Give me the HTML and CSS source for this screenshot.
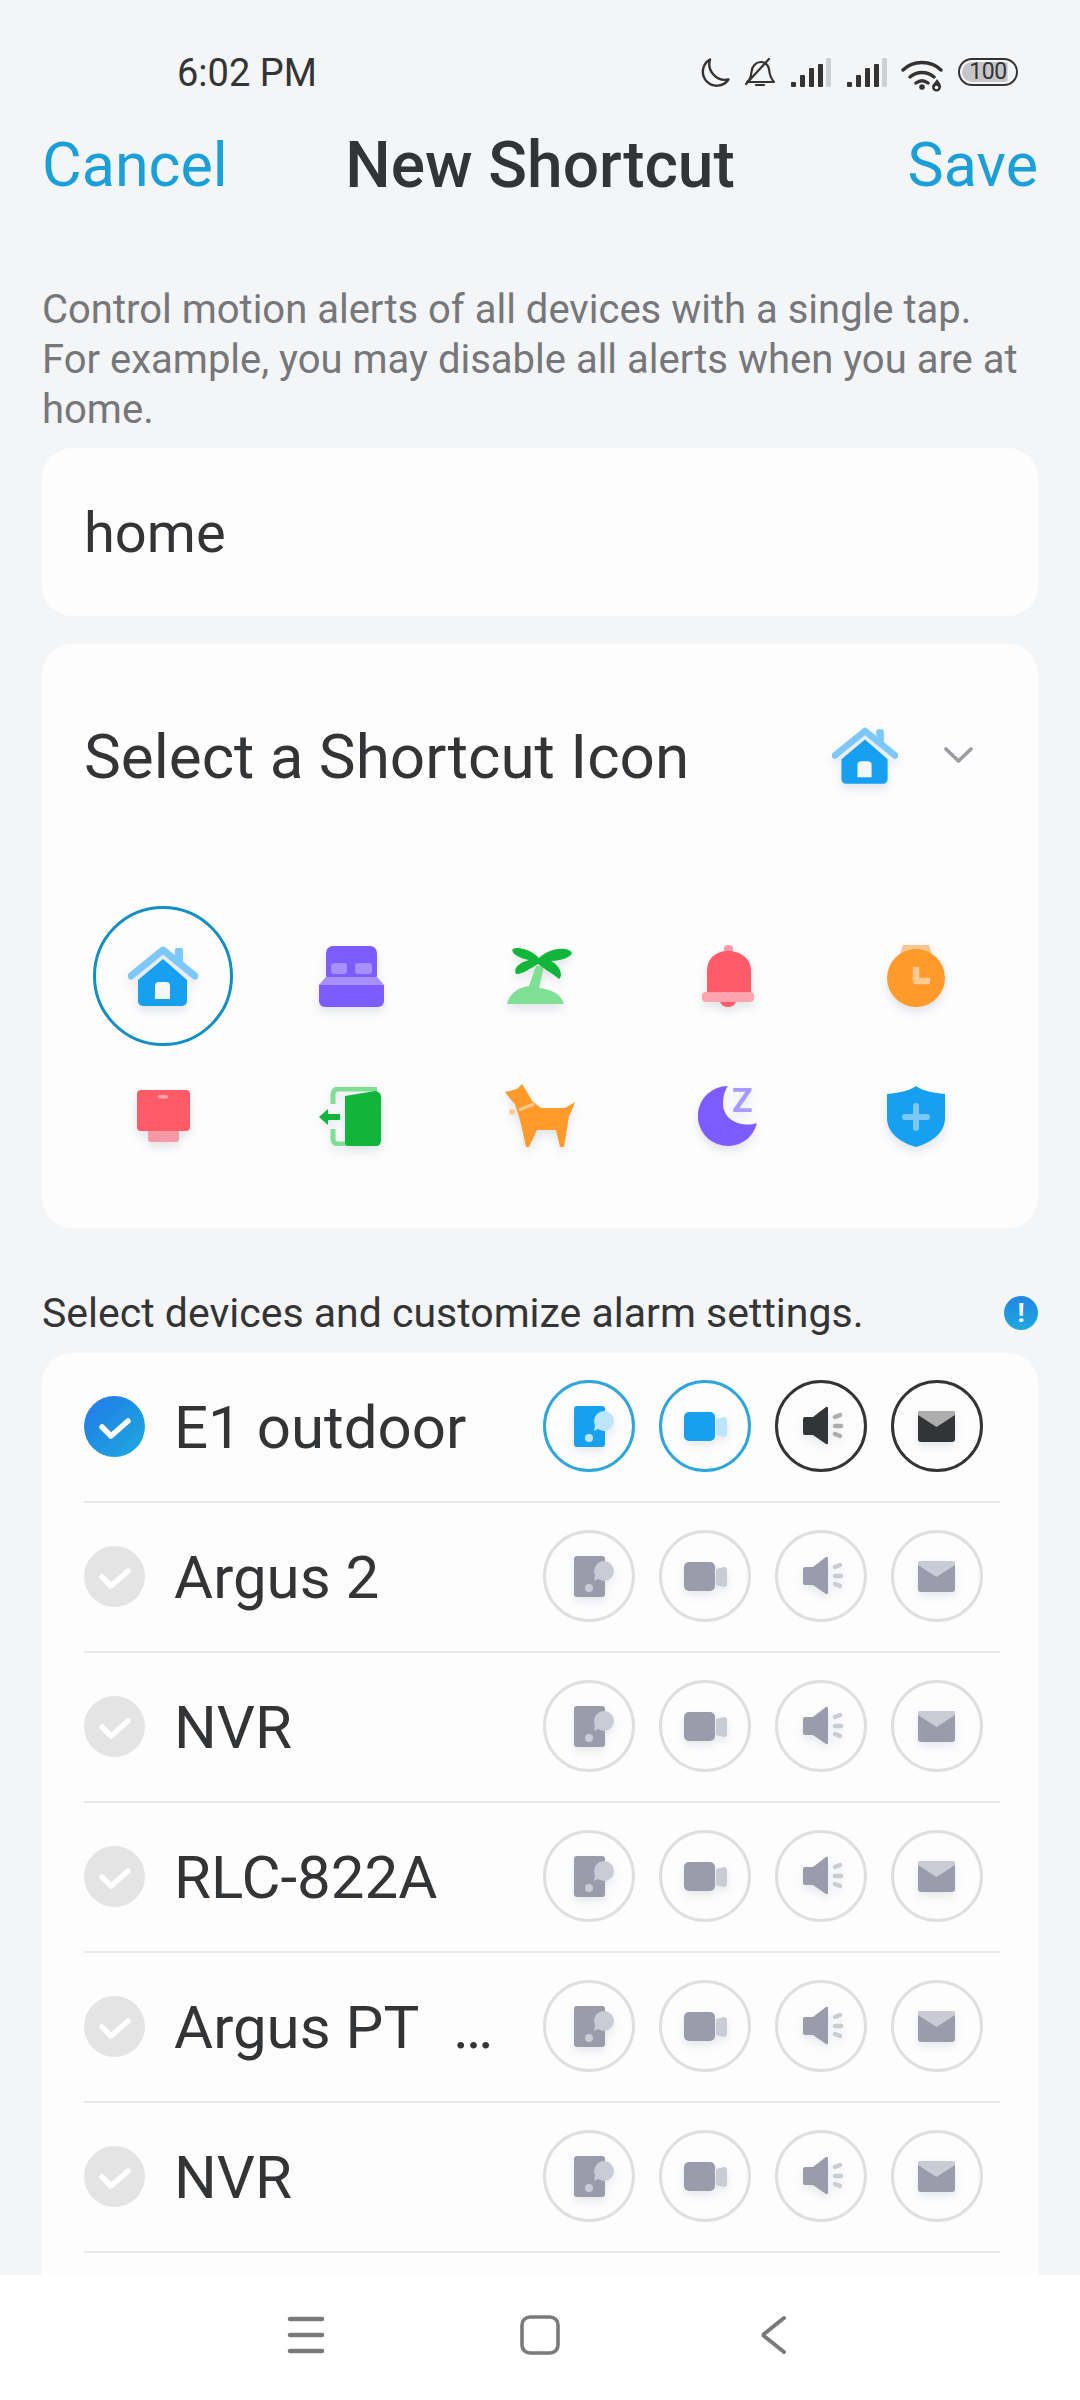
FILE: index.html
```html
<!DOCTYPE html>
<html lang="en">
<head>
  <meta charset="UTF-8" />
  <meta name="viewport" content="width=device-width, initial-scale=1.0" />
  <title>New Shortcut</title>
  <link rel="stylesheet" href="styles.css">
</head>
<body>
  <!-- shared icons -->
  <svg class="sprite" width="0" height="0">
    <symbol id="i-home" viewBox="0 0 70 61">
      <rect x="47" y="2" width="8" height="14" rx="2" fill="#7cc8fb"/>
      <path d="M3 30 35 4l32 26" fill="none" stroke="#7cc8fb" stroke-width="7" stroke-linecap="round" stroke-linejoin="round"/>
      <path d="M35 13 59 34v21a5 5 0 0 1-5 5H15a5 5 0 0 1-5-5V34Z" fill="#18a0f0"/>
      <path d="M27 53V40a4 4 0 0 1 4-4h7a4 4 0 0 1 4 4v13Z" fill="#f4f6f8"/>
    </symbol>
    <symbol id="i-door-cam" viewBox="0 0 92 92">
      <rect x="31" y="26" width="31" height="41" rx="3" fill="var(--main)"/>
      <circle cx="61" cy="41" r="10" fill="var(--soft)"/>
      <path d="M52 45l-1 6 6-3Z" fill="var(--soft)"/>
      <circle cx="46" cy="58" r="4" fill="var(--soft)"/>
    </symbol>
    <symbol id="i-video" viewBox="0 0 92 92">
      <rect x="25" y="32" width="31" height="29" rx="5" fill="var(--main)"/>
      <path d="M57 39l8-2a3 3 0 0 1 3 3v14a3 3 0 0 1-3 3l-8-2Z" fill="var(--soft)"/>
    </symbol>
    <symbol id="i-siren" viewBox="0 0 92 92">
      <path d="M30 37h8l13-10a1.500 1.500 0 0 1 2 1v35a1.500 1.500 0 0 1-2 1L38 55h-8a2 2 0 0 1-2-2V39a2 2 0 0 1 2-2Z" fill="var(--main)"/>
      <path d="M60 37l5-2M60 46h6M60 54l5 2" fill="none" stroke="var(--soft)" stroke-width="4.500" stroke-linecap="round"/>
    </symbol>
    <symbol id="i-mail" viewBox="0 0 92 92">
      <rect x="27" y="31" width="37" height="31" rx="3" fill="var(--main)"/>
      <path d="M27 33a2 2 0 0 1 2-2h33a2 2 0 0 1 2 2v2L45.500 47 27 35Z" fill="var(--soft)"/>
    </symbol>
    <symbol id="i-check" viewBox="0 0 61 61">
      <path d="M18 31l9 9 17-15" fill="none" stroke="#fff" stroke-width="5.500" stroke-linecap="round" stroke-linejoin="round"/>
    </symbol>
    <symbol id="i-signal" viewBox="0 0 40 30">
      <rect x="0" y="24" width="5" height="5" rx="1" fill="#333"/>
      <rect x="9" y="17" width="5" height="12" rx="1" fill="#333"/>
      <rect x="18" y="10" width="5" height="19" rx="1" fill="#333"/>
      <rect x="27" y="6" width="5" height="23" rx="1" fill="#333"/>
      <rect x="35" y="0" width="5" height="29" rx="1" fill="#cfd0d2"/>
    </symbol>
  </svg>

  <div class="page">
    <div class="status">
      <span class="time">6:02 PM</span>
      <div class="status-icons">
        <svg width="31" height="30" viewBox="0 0 31 30"><path d="M11 1.500a14 14 0 1 0 18.500 20C18 24 7.500 13 11 1.500Z" fill="none" stroke="#333" stroke-width="2.400" stroke-linejoin="round"/></svg>
        <svg class="bell-off" width="31" height="30" viewBox="0 0 31 30"><path d="M3 24c3-2 4-5 4.500-10C8 8 12 4 17 4c4 0 7 3 8 7 .5 5 2 10 5 13ZM12 27h8M2 26 25 1" fill="none" stroke="#333" stroke-width="2.200" stroke-linecap="round" stroke-linejoin="round"/></svg>
        <svg class="signal" width="40" height="30"><use href="#i-signal"/></svg>
        <svg class="signal" width="40" height="30"><use href="#i-signal"/></svg>
        <svg class="wifi" width="44" height="34" viewBox="0 0 44 34"><path d="M2 12C12 2 30 2 40 12M9 19c7-6 17-6 24 0M15 25c4-3 8-3 12 0" fill="none" stroke="#333" stroke-width="3.400" stroke-linecap="round"/><circle cx="21" cy="29" r="2.800" fill="#333"/><path d="M36 21c1 2 4 4 4 8a4.500 4.500 0 0 1-9 0c0-3 3-4 5-8Z" fill="#333"/><circle cx="35.500" cy="29.500" r="1.800" fill="#f4f5f7"/></svg>
        <div class="battery"><span class="battery-num">100</span></div>
      </div>
    </div>

    <header class="topbar">
      <span class="link">Cancel</span>
      <h1>New Shortcut</h1>
      <span class="link save">Save</span>
    </header>

    <p class="hint">Control motion alerts of all devices with a single tap.<br>For example, you may disable all alerts when you are at<br>home.</p>

    <div class="card name-card">home</div>

    <div class="card icon-card">
      <div class="icon-head">
        <span class="icon-title">Select a Shortcut Icon</span>
        <svg class="shadow" width="66" height="58"><use href="#i-home"/></svg>
        <svg class="chevron" width="29" height="16" viewBox="0 0 29 16"><path d="M2 2l12.500 12L27 2" fill="none" stroke="#9a9ba3" stroke-width="3.600" stroke-linecap="round" stroke-linejoin="round"/></svg>
      </div>
      <div class="icon-grid">
        <div class="pick selected"><svg class="shadow" width="70" height="61"><use href="#i-home"/></svg></div>
        <div class="pick">
          <svg class="shadow" width="65" height="61" viewBox="0 0 65 61"><rect x="7" width="51" height="36" rx="7" fill="#7e5bfe"/><rect x="12" y="17" width="16" height="11" rx="3" fill="#a88eff"/><rect x="36" y="17" width="17" height="11" rx="3" fill="#a88eff"/><path d="M7 31h51l7 8H0Z" fill="#a88eff"/><path d="M0 39h65v16a6 6 0 0 1-6 6H6a6 6 0 0 1-6-6Z" fill="#7e5bfe"/></svg>
        </div>
        <div class="pick">
          <svg class="shadow" width="65" height="60" viewBox="0 0 65 60"><path d="M0 58C3 48 9 42 22 40L29 20h8l-5 22c10 1 22 5 25 16Z" fill="#7fdf95"/><path d="M32 12C24 3 10 0 6 3 3 6 10 12 22 14 12 17 6 22 9 28c5 1 15-6 22-10 5 4 15 10 21 15 4-3 2-13-8-18 10 0 20-4 21-8C63 1 44 0 32 12Z" fill="#10b53a"/></svg>
        </div>
        <div class="pick">
          <svg class="shadow" width="52" height="62" viewBox="0 0 52 62"><rect x="22" width="9" height="10" rx="4" fill="#ff9aa5"/><path d="M5 48V26C5 13 14 6 26 6s23 7 23 20v22Z" fill="#ff5b68"/><path d="M18 56h16a8 6 0 0 1-16 0Z" fill="#ff5b68"/><rect y="47" width="52" height="10" rx="4" fill="#ffa3ae"/></svg>
        </div>
        <div class="pick">
          <svg class="shadow" width="58" height="62" viewBox="0 0 58 62"><path d="M16 0h26l3 10H13Z" fill="#ffc68f"/><circle cx="29" cy="33" r="29" fill="#ff9a2b"/><path d="M29 22v14h14" fill="none" stroke="#ffc98f" stroke-width="6.500" stroke-linejoin="round"/></svg>
        </div>
        <div class="pick">
          <svg class="shadow" width="53" height="52" viewBox="0 0 53 52"><rect x="11" y="38" width="31" height="14" rx="3" fill="#f59aa5"/><rect width="53" height="41" rx="4" fill="#ff5b68"/><rect x="21" y="5" width="10" height="3.500" rx="1.500" fill="#ffa3ae"/></svg>
        </div>
        <div class="pick">
          <svg class="shadow" width="64" height="59" viewBox="0 0 64 59"><path d="M14 17V7a5 5 0 0 1 5-5h39M14 42v10a5 5 0 0 0 5 5h39" fill="none" stroke="#7fdf95" stroke-width="5"/><path d="M26 9l30-5a6 6 0 0 1 6 6v44a5 5 0 0 1-6 5H30a4 4 0 0 1-4-4Z" fill="#10b53a"/><path d="M0 30l9-8v5h12v6H9v5Z" fill="#10b53a"/></svg>
        </div>
        <div class="pick">
          <svg class="shadow" width="70" height="65" viewBox="0 0 70 65"><path d="M0 8 12 5 17 0l5 8 5 9 9 7h24l10-6c-2 6-4 10-6 14l-5 31h-4l-4-17H32l-8 17h-3l-5-23c-2-8-5-16-6-20C6 16 3 12 0 8Z" fill="#ff9a2b"/><path d="M14 26l15-6" stroke="#ffc98f" stroke-width="3" fill="none"/><circle cx="7" cy="28" r="3" fill="#ffc98f"/></svg>
        </div>
        <div class="pick">
          <svg class="shadow moon" width="59" height="68" viewBox="0 -8 59 68"><path d="M30 0a30 30 0 1 0 29 37C45 42 25 35 25 18c0-8 2-14 5-18Z" fill="#7e5bfe"/><text class="snooze" x="34" y="26">Z</text></svg>
        </div>
        <div class="pick">
          <svg class="shadow" width="58" height="61" viewBox="0 0 58 61"><path d="M29 0c7 5 17 7 29 8v24c0 14-12 24-29 29C12 56 0 46 0 32V8c12-1 22-3 29-8Z" fill="#18a0f0"/><path d="M29 20v22M18 31h22" stroke="#7cc8fb" stroke-width="6" stroke-linecap="round" fill="none"/></svg>
        </div>
      </div>
    </div>

    <div class="list-label">
      <span>Select devices and customize alarm settings.</span>
      <span class="info">!</span>
    </div>

    <div class="card device-card">
      <div class="device">
        <span class="tick on"><svg width="61" height="61"><use href="#i-check"/></svg></span>
        <span class="device-name">E1 outdoor</span>
        <div class="alarms">
          <span class="alarm blue"><svg width="92" height="92"><use href="#i-door-cam"/></svg></span>
          <span class="alarm blue"><svg width="92" height="92"><use href="#i-video"/></svg></span>
          <span class="alarm dark"><svg width="92" height="92"><use href="#i-siren"/></svg></span>
          <span class="alarm dark"><svg width="92" height="92"><use href="#i-mail"/></svg></span>
        </div>
      </div>
      <div class="device">
        <span class="tick"><svg width="61" height="61"><use href="#i-check"/></svg></span>
        <span class="device-name">Argus 2</span>
        <div class="alarms">
          <span class="alarm"><svg width="92" height="92"><use href="#i-door-cam"/></svg></span>
          <span class="alarm"><svg width="92" height="92"><use href="#i-video"/></svg></span>
          <span class="alarm"><svg width="92" height="92"><use href="#i-siren"/></svg></span>
          <span class="alarm"><svg width="92" height="92"><use href="#i-mail"/></svg></span>
        </div>
      </div>
      <div class="device">
        <span class="tick"><svg width="61" height="61"><use href="#i-check"/></svg></span>
        <span class="device-name">NVR</span>
        <div class="alarms">
          <span class="alarm"><svg width="92" height="92"><use href="#i-door-cam"/></svg></span>
          <span class="alarm"><svg width="92" height="92"><use href="#i-video"/></svg></span>
          <span class="alarm"><svg width="92" height="92"><use href="#i-siren"/></svg></span>
          <span class="alarm"><svg width="92" height="92"><use href="#i-mail"/></svg></span>
        </div>
      </div>
      <div class="device">
        <span class="tick"><svg width="61" height="61"><use href="#i-check"/></svg></span>
        <span class="device-name">RLC-822A</span>
        <div class="alarms">
          <span class="alarm"><svg width="92" height="92"><use href="#i-door-cam"/></svg></span>
          <span class="alarm"><svg width="92" height="92"><use href="#i-video"/></svg></span>
          <span class="alarm"><svg width="92" height="92"><use href="#i-siren"/></svg></span>
          <span class="alarm"><svg width="92" height="92"><use href="#i-mail"/></svg></span>
        </div>
      </div>
      <div class="device">
        <span class="tick"><svg width="61" height="61"><use href="#i-check"/></svg></span>
        <span class="device-name">Argus PT <span class="more">…</span></span>
        <div class="alarms">
          <span class="alarm"><svg width="92" height="92"><use href="#i-door-cam"/></svg></span>
          <span class="alarm"><svg width="92" height="92"><use href="#i-video"/></svg></span>
          <span class="alarm"><svg width="92" height="92"><use href="#i-siren"/></svg></span>
          <span class="alarm"><svg width="92" height="92"><use href="#i-mail"/></svg></span>
        </div>
      </div>
      <div class="device">
        <span class="tick"><svg width="61" height="61"><use href="#i-check"/></svg></span>
        <span class="device-name">NVR</span>
        <div class="alarms">
          <span class="alarm"><svg width="92" height="92"><use href="#i-door-cam"/></svg></span>
          <span class="alarm"><svg width="92" height="92"><use href="#i-video"/></svg></span>
          <span class="alarm"><svg width="92" height="92"><use href="#i-siren"/></svg></span>
          <span class="alarm"><svg width="92" height="92"><use href="#i-mail"/></svg></span>
        </div>
      </div>
    </div>
  </div>

  <nav class="navbar">
    <svg width="40" height="40" viewBox="0 0 40 40"><path d="M4 4h32M4 20h32M4 36h32" stroke="#7a7a7a" stroke-width="4.500" stroke-linecap="round" fill="none"/></svg>
    <svg width="40" height="40" viewBox="0 0 40 40"><rect x="2" y="2" width="36" height="36" rx="8" fill="none" stroke="#7a7a7a" stroke-width="3.600"/></svg>
    <svg width="40" height="40" viewBox="0 0 40 40"><path d="M30 3 10 19a1.500 1.500 0 0 0 0 2l20 16" fill="none" stroke="#7a7a7a" stroke-width="4" stroke-linecap="round" stroke-linejoin="round"/></svg>
  </nav>
</body>
</html>
```

FILE: styles.css
```css
:root {
  --bg: #f4f5f7;
  --card: #fdfdfe;
  --text: #333436;
  --muted: #75777b;
  --accent: #1a9fd9;
}

* {
  box-sizing: border-box;
}

body {
  margin: 0;
  width: 1080px;
  height: 2400px;
  display: flex;
  flex-direction: column;
  overflow: hidden;
  background: var(--bg);
  color: var(--text);
  font-family: Roboto, "Noto Sans", sans-serif;
}

.sprite {
  position: absolute;
}

.page {
  flex: 1;
  min-height: 0;
  display: flex;
  flex-direction: column;
  overflow: hidden;
}

.status {
  height: 46px;
  margin-top: 50px;
  padding: 0 62px 0 177px;
  display: flex;
  justify-content: space-between;
  align-items: center;
}

.time {
  font-size: 38px;
}

.status-icons {
  display: flex;
  align-items: flex-start;
  gap: 14px;
  height: 34px;
  margin-top: 4px;
}

.signal {
  margin-left: 2px;
}

.battery {
  width: 60px;
  height: 28px;
  padding: 2px;
  margin-left: -1px;
  border: 2.500px solid #333;
  border-radius: 14px;
  background: linear-gradient(#c6c6c8, #c6c6c8) 0 0 / 85% 100% no-repeat;
  background-clip: content-box;
  font-size: 23px;
  line-height: 19px;
  text-align: center;
}

.battery-num {
  letter-spacing: -0.5px;
}

.topbar {
  height: 60px;
  margin-top: 39px;
  padding: 0 42px;
  display: flex;
  align-items: center;
}

.topbar h1 {
  margin: 0;
  font-size: 64px;
  font-weight: 500;
}

.link {
  flex: 1;
  font-size: 61px;
  color: var(--accent);
}

.save {
  text-align: right;
}

.hint {
  margin: 90px 42px 13px;
  font-size: 40px;
  line-height: 50px;
  color: var(--muted);
  white-space: nowrap;
}

.card {
  margin: 0 42px;
  background: var(--card);
  border-radius: 30px;
}

.name-card {
  flex: none;
  height: 168px;
  padding: 2px 42px 0;
  display: flex;
  align-items: center;
  font-size: 56px;
}

.icon-card {
  flex: none;
  height: 584px;
  margin-top: 28px;
  padding: 0 27px;
}

.icon-head {
  height: 224px;
  padding: 0 38px 0 15px;
  margin-bottom: 38px;
  display: flex;
  align-items: center;
}

.icon-title {
  flex: 1;
  font-size: 62px;
}

.chevron {
  margin: 0 0 3px 46px;
}

.icon-grid {
  display: grid;
  grid-template-columns: repeat(5, 188.25px);
  grid-auto-rows: 140px;
}

.pick {
  width: 140px;
  height: 140px;
  margin: 0 auto;
  display: flex;
  align-items: center;
  justify-content: center;
  border-radius: 50%;
}

.pick.selected {
  border: 3px solid #0f8fc2;
}

.shadow {
  filter: drop-shadow(0 5px 5px rgba(60, 70, 90, 0.14));
}

.moon {
  margin-top: -8px;
}

.snooze {
  font-size: 34px;
  font-weight: 700;
  fill: #a79bff;
}

.list-label {
  flex: none;
  height: 50px;
  margin: 60px 42px 15px;
  display: flex;
  justify-content: space-between;
  align-items: center;
  font-size: 41px;
}

.info {
  width: 34px;
  height: 34px;
  border-radius: 50%;
  background: linear-gradient(#2186e6, #1ea8dc);
  color: #fff;
  font-size: 26px;
  font-weight: 700;
  line-height: 34px;
  text-align: center;
}

.device-card {
  flex: 1;
  min-height: 0;
  padding: 0 38px 0 42px;
  border-radius: 30px 30px 0 0;
}

.device {
  height: 150px;
  padding: 0 17px 2px 0;
  display: flex;
  align-items: center;
  border-bottom: 2px solid #e8e8ea;
}

.tick {
  flex: none;
  width: 61px;
  height: 61px;
  border-radius: 50%;
  background: #e4e4e5;
}

.tick.on {
  background: linear-gradient(135deg, #2179ea, #1eabdc);
}

.tick svg {
  display: block;
}

.device-name {
  flex: 1;
  margin-left: 29px;
  padding-top: 3px;
  font-size: 60px;
  white-space: nowrap;
}

.more {
  margin-left: 20px;
}

.alarms {
  display: flex;
  gap: 24px;
}

.alarm {
  --main: #9a9bab;
  --soft: #cbcbd6;
  position: relative;
  width: 92px;
  height: 92px;
  border: 3px solid #dfdfe1;
  border-radius: 50%;
}

.alarm svg {
  position: absolute;
  left: -3px;
  top: -3px;
  filter: drop-shadow(0 4px 4px rgba(60, 70, 90, 0.12));
}

.alarm.blue {
  --main: #17a0ee;
  --soft: #bde5fa;
  border-color: #2ea6dc;
}

.alarm.dark {
  --main: #333436;
  --soft: #adadad;
  border-color: #333436;
}

.navbar {
  flex: none;
  height: 125px;
  padding-bottom: 5px;
  display: flex;
  justify-content: center;
  align-items: center;
  gap: 194px;
  background: #fff;
}
```
